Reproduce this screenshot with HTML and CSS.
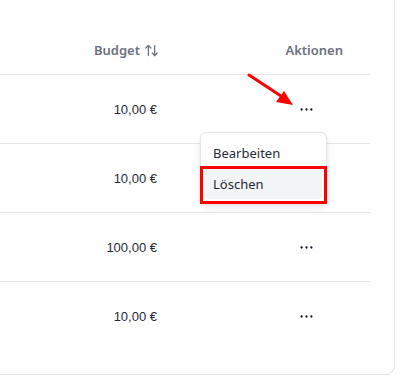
FILE: index.html
```html
<!DOCTYPE html>
<html lang="de">
<head>
<meta charset="utf-8">
<title>Budget</title>
<link rel="stylesheet" href="styles.css">
</head>
<body>
<div class="page">
  <div class="card">
    <div class="row head">
      <div class="c-budget"><span>Budget</span>
        <svg class="sort" viewBox="0 0 24 24" width="15" height="15" fill="none" stroke="currentColor" stroke-width="2" stroke-linecap="round" stroke-linejoin="round"><path d="m21 16-4 4-4-4"/><path d="M17 20V4"/><path d="m3 8 4-4 4 4"/><path d="M7 4v16"/></svg>
      </div>
      <div class="c-act">Aktionen</div>
    </div>
    <div class="row">
      <div class="c-budget val">10,00 €</div>
      <div class="c-act"><span class="dots"><svg viewBox="0 0 16 16" width="16" height="16"><circle cx="2" cy="8" r="1.4"/><circle cx="8" cy="8" r="1.4"/><circle cx="14" cy="8" r="1.4"/></svg></span></div>
    </div>
    <div class="row">
      <div class="c-budget val">10,00 €</div>
      <div class="c-act"></div>
    </div>
    <div class="row">
      <div class="c-budget val">100,00 €</div>
      <div class="c-act"><span class="dots"><svg viewBox="0 0 16 16" width="16" height="16"><circle cx="2" cy="8" r="1.4"/><circle cx="8" cy="8" r="1.4"/><circle cx="14" cy="8" r="1.4"/></svg></span></div>
    </div>
    <div class="row last">
      <div class="c-budget val">10,00 €</div>
      <div class="c-act"><span class="dots"><svg viewBox="0 0 16 16" width="16" height="16"><circle cx="2" cy="8" r="1.4"/><circle cx="8" cy="8" r="1.4"/><circle cx="14" cy="8" r="1.4"/></svg></span></div>
    </div>
  </div>

  <div class="menu">
    <div class="item">Bearbeiten</div>
    <div class="item active">Löschen</div>
  </div>
  <div class="highlight"></div>
  <svg class="arrow" width="60" height="45" viewBox="0 0 60 45">
    <line x1="3" y1="3" x2="38" y2="26" stroke="#f00" stroke-width="3" stroke-linecap="round"/>
    <polygon points="47,33 30,30 38,19" fill="#f00"/>
  </svg>
</div>
</body>
</html>
```
FILE: styles.css
```css
* { box-sizing: border-box; }
html, body { margin: 0; padding: 0; background: #fff; }
body { font-family: "Noto Sans", "Open Sans", sans-serif; color: #111827; }

.page {
  position: relative;
  width: 412px;
  height: 386px;
  overflow: hidden;
}

.card {
  margin: -10px 17px 0 -20px;
  padding: 35px 24px 24px 0;
  border: 1px solid #e2e3e6;
  border-radius: 9px;
  background: #fff;
}

.row {
  display: flex;
  align-items: center;
  height: 69px;
  border-bottom: 1px solid #e5e7eb;
}
.row.head { height: 49px; }
.row.last { height: 68px; border-bottom: none; }

.c-budget {
  width: 176px;
  flex: none;
  display: flex;
  justify-content: flex-end;
  align-items: center;
}
.head .c-budget {
  gap: 4px;
  width: 178px;
}
.c-act {
  flex: 1;
  display: flex;
  justify-content: flex-end;
  align-items: center;
}

.head {
  font-size: 13px;
  font-weight: 600;
  color: #6b7280;
}
.head .c-act { padding-right: 27px; }
.sort { color: #6b7280; }

.val {
  font-family: "Liberation Sans", Arial, sans-serif;
  font-size: 13px;
  color: #1f2937;
}

.dots {
  display: flex;
  justify-content: center;
  align-items: center;
  width: 32px;
  height: 32px;
  margin-right: 48px;
}
.dots svg { width: 13px; height: 13px; fill: #111827; }

.menu {
  position: absolute;
  left: 200px;
  top: 132px;
  width: 127px;
  padding: 4px;
  background: #fff;
  border: 1px solid #e5e7eb;
  border-radius: 6px;
  box-shadow: 0 4px 10px rgba(0,0,0,0.08), 0 1px 3px rgba(0,0,0,0.06);
}
.item {
  height: 31px;
  padding: 0 8px;
  display: flex;
  align-items: center;
  font-size: 13px;
  color: #1f2937;
  border-radius: 4px;
}
.item.active { background: #f3f4f6; }

.highlight {
  position: absolute;
  left: 200px;
  top: 166px;
  width: 127px;
  height: 38px;
  border: 3px solid #f00;
}

.arrow {
  position: absolute;
  left: 246px;
  top: 72px;
}
```
